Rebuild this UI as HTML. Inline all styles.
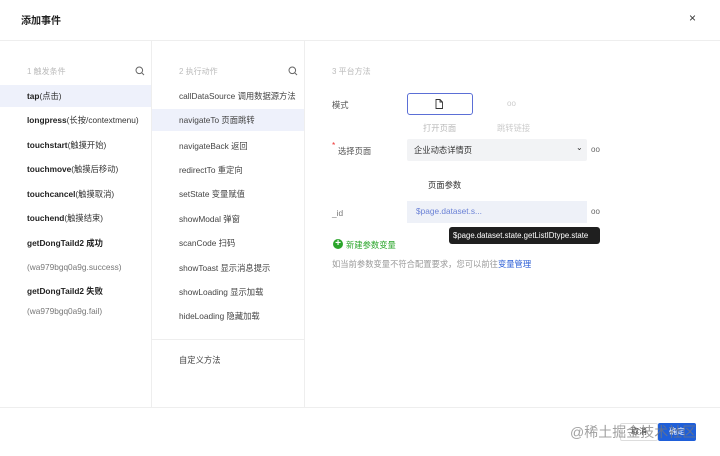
<!DOCTYPE html>
<html><head><meta charset="utf-8"><style>
*{margin:0;padding:0;box-sizing:border-box}
body{width:720px;height:456px;background:#fff;font-family:"Liberation Sans","Noto Sans CJK SC",sans-serif;font-size:8.3px;color:#333;position:relative;overflow:hidden}
.a{position:absolute;white-space:nowrap}
.row{position:absolute;left:0;height:22px;line-height:22px;white-space:nowrap;padding-left:27px}
.l .row{width:151px}
.m{position:absolute;left:152px;top:0;width:152px;height:407px}
.m .row{width:152px}
b{font-weight:bold;color:#222}
.g{color:#999}
</style></head><body>
<div class="a" style="left:21px;top:12px;font-size:10px;font-weight:bold;color:#222">添加事件</div>
<div class="a" style="left:689px;top:11px;font-size:12px;color:#333">×</div>
<div class="a" style="left:0;top:40px;width:720px;height:1px;background:#eee"></div>
<div class="a" style="left:151px;top:41px;width:1px;height:366px;background:#eee"></div>
<div class="a" style="left:304px;top:41px;width:1px;height:366px;background:#eee"></div>
<div class="a" style="left:0;top:407px;width:720px;height:1px;background:#eee"></div>

<div class="a g" style="left:27px;top:66px;font-size:8px;color:#bbb">1 触发条件</div>
<svg class="a" style="left:135px;top:66px" width="10" height="10"><circle cx="4.3" cy="4.3" r="3.3" fill="none" stroke="#666" stroke-width="1"/><path d="M6.8 6.8L9 9" stroke="#666"/></svg>
<div class="a g" style="left:179px;top:66px;font-size:8px;color:#bbb">2 执行动作</div>
<svg class="a" style="left:288px;top:66px" width="10" height="10"><circle cx="4.3" cy="4.3" r="3.3" fill="none" stroke="#666" stroke-width="1"/><path d="M6.8 6.8L9 9" stroke="#666"/></svg>
<div class="a g" style="left:332px;top:66px;font-size:8px;color:#bbb">3 平台方法</div>

<div class="l">
<div class="row" style="top:85px;background:#eef1fb"><b>tap</b>(点击)</div>
<div class="row" style="top:109px"><b>longpress</b>(长按/contextmenu)</div>
<div class="row" style="top:134px"><b>touchstart</b>(触摸开始)</div>
<div class="row" style="top:158px"><b>touchmove</b>(触摸后移动)</div>
<div class="row" style="top:183px"><b>touchcancel</b>(触摸取消)</div>
<div class="row" style="top:207px"><b>touchend</b>(触摸结束)</div>
<div class="row" style="top:232px"><b>getDongTaiId2 成功</b></div>
<div class="row" style="top:256px;color:#777">(wa979bgq0a9g.success)</div>
<div class="row" style="top:280px"><b>getDongTaiId2 失败</b></div>
<div class="row" style="top:300px;color:#777">(wa979bgq0a9g.fail)</div>
</div>
<div class="m" style="color:#444">
<div class="row" style="top:85px">callDataSource 调用数据源方法</div>
<div class="row" style="top:109px;background:#eef1fb">navigateTo 页面跳转</div>
<div class="row" style="top:135px">navigateBack 返回</div>
<div class="row" style="top:159px">redirectTo 重定向</div>
<div class="row" style="top:183px">setState 变量赋值</div>
<div class="row" style="top:208px">showModal 弹窗</div>
<div class="row" style="top:232px">scanCode 扫码</div>
<div class="row" style="top:257px">showToast 显示消息提示</div>
<div class="row" style="top:281px">showLoading 显示加载</div>
<div class="row" style="top:305px">hideLoading 隐藏加载</div>
<div class="a" style="left:0;top:339px;width:152px;height:1px;background:#eee"></div>
<div class="row" style="top:349px">自定义方法</div>
</div>

<div class="a" style="left:332px;top:99px;color:#555">模式</div>
<div class="a" style="left:407px;top:93px;width:66px;height:22px;border:1px solid #5b6fd6;border-radius:3px"></div>
<svg class="a" style="left:435px;top:99px" width="8" height="10"><path d="M1 .5H5L7.5 3V9.5H1Z M5 .5V3H7.5" fill="none" stroke="#333" stroke-width="0.9"/></svg>
<div class="a" style="left:507px;top:99px;color:#ccc;font-size:8px">oo</div>
<div class="a" style="left:423px;top:122px;color:#bbb">打开页面</div>
<div class="a" style="left:497px;top:122px;color:#ccc">跳转链接</div>
<div class="a" style="left:332px;top:140px;color:#e33">*</div>
<div class="a" style="left:338px;top:145px;color:#555">选择页面</div>
<div class="a" style="left:407px;top:139px;width:180px;height:22px;background:#f2f3f5;border-radius:2px"></div>
<div class="a" style="left:414px;top:144px;color:#333">企业动态详情页</div>
<div class="a" style="left:576px;top:143px;color:#333;font-size:8px">⌄</div>
<div class="a" style="left:591px;top:145px;color:#666;font-size:8px">oo</div>
<div class="a" style="left:428px;top:179px;color:#333">页面参数</div>
<div class="a" style="left:332px;top:208px;color:#777">_id</div>
<div class="a" style="left:407px;top:201px;width:180px;height:22px;background:#eef1f8"></div>
<div class="a" style="left:416px;top:206px;color:#6b82d6">$page.dataset.s...</div>
<div class="a" style="left:591px;top:207px;color:#666;font-size:8px">oo</div>
<div class="a" style="left:449px;top:227px;width:151px;height:17px;background:#1f1f1f;border-radius:3px;color:#fff;line-height:17px;padding-left:4px;font-size:7.8px;overflow:hidden">$page.dataset.state.getListIDtype.state</div>
<div class="a" style="left:333px;top:239px;width:10px;height:10px;border-radius:50%;background:#2aa52a;color:#fff;font-size:10px;line-height:10px;text-align:center;font-weight:bold">+</div>
<div class="a" style="left:346px;top:239px;color:#2aa52a">新建参数变量</div>
<div class="a" style="left:332px;top:258px;color:#999">如当前参数变量不符合配置要求，您可以前往<span style="color:#2d5fd6">变量管理</span></div>

<div class="a" style="left:620px;top:423px;width:38px;height:18px;border:1px solid #ddd;border-radius:2px;text-align:center;line-height:16px;font-size:8px">取消</div>
<div class="a" style="left:658px;top:423px;width:38px;height:18px;background:#1f5fd9;border-radius:2px;color:#fff;text-align:center;line-height:18px;font-size:8px">确定</div>
<div class="a" style="left:570px;top:422px;font-size:14px;color:rgba(120,120,120,0.7)">@稀土掘金技术社区</div>
</body></html>
